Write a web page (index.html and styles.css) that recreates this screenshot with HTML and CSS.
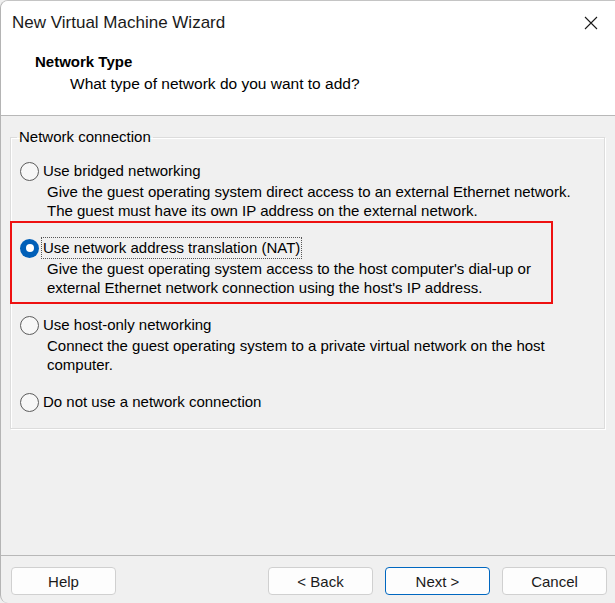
FILE: index.html
```html
<!DOCTYPE html>
<html>
<head>
<meta charset="utf-8">
<link rel="stylesheet" href="styles.css">
</head>
<body>
<div class="window">
  <div class="header">
    <div class="titlebar">
      <span class="title">New Virtual Machine Wizard</span>
      <svg class="close" width="14" height="14" viewBox="0 0 14 14"><path d="M1 1 L13 13 M13 1 L1 13" stroke="#1a1a1a" stroke-width="1.1" fill="none"/></svg>
    </div>
    <div class="page-title">Network Type</div>
    <div class="page-sub">What type of network do you want to add?</div>
  </div>
  <div class="content">
    <fieldset class="group">
      <legend>Network connection</legend>
      <div class="options">
        <div class="option">
          <div class="opt-label"><span class="radio"></span><span class="label-text">Use bridged networking</span></div>
          <div class="desc">Give the guest operating system direct access to an external Ethernet network.<br>The guest must have its own IP address on the external network.</div>
        </div>
        <div class="option">
          <div class="opt-label"><span class="radio checked"></span><span class="label-text focused">Use network address translation (NAT)</span></div>
          <div class="desc">Give the guest operating system access to the host computer's dial-up or<br>external Ethernet network connection using the host's IP address.</div>
        </div>
        <div class="option">
          <div class="opt-label"><span class="radio"></span><span class="label-text">Use host-only networking</span></div>
          <div class="desc">Connect the guest operating system to a private virtual network on the host<br>computer.</div>
        </div>
        <div class="option">
          <div class="opt-label"><span class="radio"></span><span class="label-text">Do not use a network connection</span></div>
        </div>
      </div>
    </fieldset>
  </div>
  <div class="footer">
    <button class="btn">Help</button>
    <div class="spacer"></div>
    <button class="btn">&lt; Back</button>
    <button class="btn primary">Next &gt;</button>
    <button class="btn">Cancel</button>
  </div>
  <div class="highlight"></div>
</div>
</body>
</html>
```

FILE: styles.css
```css
* { box-sizing: border-box; }
html, body {
  margin: 0;
  padding: 0;
  background: #f0f0f0;
}
body {
  font-family: "Liberation Sans", Arial, sans-serif;
  color: #000;
  font-size: 14px;
}
.window {
  position: relative;
  width: 615px;
  height: 603px;
  background: #f0f0f0;
  border-left: 1px solid #b4b4b4;
  border-top: 1px solid #c4c4c4;
  border-radius: 8px 0 0 8px;
  overflow: hidden;
  display: flex;
  flex-direction: column;
}
.header {
  background: #fff;
  height: 115px;
  border-bottom: 1px solid #b8b8b8;
  flex: none;
}
.titlebar {
  height: 43px;
  display: flex;
  align-items: center;
  justify-content: space-between;
  padding: 0 17px 0 11px;
}
.title {
  font-size: 17px;
  color: #1a1a1a;
}
.close { display: block; }
.page-title {
  font-weight: bold;
  font-size: 15px;
  padding-left: 34px;
  margin-top: 8px;
  line-height: 20px;
}
.page-sub {
  font-size: 15.5px;
  padding-left: 69px;
  line-height: 23px;
}
.content {
  flex: 1;
  padding: 12px 10px 0 9px;
}
.group {
  margin: 0;
  padding: 0;
  min-width: 0;
  border: 1px solid #dcdcdc;
  box-shadow: 1px 1px 0 #fff, inset 1px 1px 0 #fff;
}
.group legend {
  margin-left: 6px;
  padding: 0 2px;
  font-size: 15px;
  line-height: 18px;
}
.options {
  padding: 15px 0 16px 9px;
  display: flex;
  flex-direction: column;
  gap: 18px;
}
.opt-label {
  display: flex;
  align-items: center;
  height: 20px;
  font-size: 15px;
}
.radio {
  width: 19px;
  height: 19px;
  border-radius: 50%;
  border: 1px solid #5c5c5c;
  background: #f7f7f7;
  flex: none;
  margin-right: 2px;
  position: relative;
}
.radio.checked {
  border: none;
  background: #005fb8;
}
.radio.checked::after {
  content: "";
  position: absolute;
  left: 5.5px;
  top: 5.5px;
  width: 8px;
  height: 8px;
  border-radius: 50%;
  background: #fff;
}
.label-text {
  padding: 0 1px;
  line-height: 20px;
  border: 1px dotted transparent;
}
.label-text.focused {
  border-color: #555;
}
.desc {
  padding-left: 27px;
  line-height: 19px;
  font-size: 15px;
  margin-top: 1px;
}
.footer {
  flex: none;
  height: 48px;
  border-top: 1px solid #b8b8b8;
  display: flex;
  align-items: flex-start;
  padding: 11px 8px 0 10px;
  gap: 12px;
}
.spacer { flex: 1; }
.btn {
  width: 105px;
  height: 28px;
  font-family: inherit;
  font-size: 15px;
  color: #1a1a1a;
  background: #fdfdfd;
  border: 1px solid #d0d0d0;
  border-radius: 4px;
  padding: 0;
}
.btn.primary {
  border-color: #0067c0;
}
.highlight {
  position: absolute;
  left: 9px;
  top: 220px;
  width: 543px;
  height: 83px;
  border: 2px solid #ee1111;
}
```
